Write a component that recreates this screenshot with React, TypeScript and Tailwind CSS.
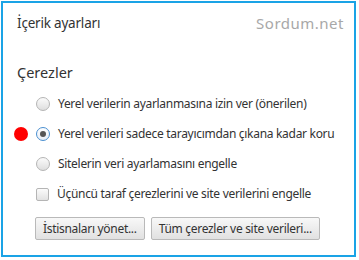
const font = { fontFamily: '"Noto Sans", "Open Sans", sans-serif' };

// Radio
const Radio = ({ checked }: { checked?: boolean }) =>
    checked ? (
        <span className="w-[14px] h-[14px] rounded-full border border-[#4a8fd0] bg-gradient-to-b from-[#ffffff] to-[#e8eef6] flex items-center justify-center shrink-0">
            <span className="w-[6px] h-[6px] rounded-full bg-[#555555]"></span>
        </span>
    ) : (
        <span className="w-[14px] h-[14px] rounded-full border border-[#b5b5b5] bg-gradient-to-b from-[#fbfbfb] to-[#dedede] shrink-0"></span>
    );

// Checkbox
const Check = () => (
    <span className="w-[13px] h-[13px] rounded-[2px] border border-[#b5b5b5] bg-gradient-to-b from-[#fbfbfb] to-[#e2e2e2] shrink-0"></span>
);

// Row
const Row = ({ children, label, dot }: { children: React.ReactNode; label: string; dot?: boolean }) => (
    <div className="h-[20px] flex items-center">
        <span className={`w-[14px] h-[14px] rounded-full shrink-0 ${dot ? "bg-[#ff0000]" : ""}`}></span>
        <span className="w-[8px] shrink-0"></span>
        {children}
        <span className="ml-[8px] text-[12px] tracking-[-0.3px] text-[#333333] whitespace-nowrap">{label}</span>
    </div>
);

// Button
const Btn = ({ label }: { label: string }) => (
    <button className="h-[23px] px-[7px] border border-[#b9b9b9] rounded-[2px] bg-gradient-to-b from-[#f8f8f8] to-[#e1e1e1] text-[12px] tracking-[-0.3px] text-[#333333] whitespace-nowrap leading-none">
        {label}
    </button>
);

export default function App() {
    return (
        <div className="w-[359px] h-[260px] bg-white p-[1px]" style={font}>
            <div className="w-[355px] h-[256px] border-2 border-[#1aa3e6] bg-white flex flex-col pl-[11px] pr-[10px]">
                <div className="flex items-center justify-between h-[20px] mt-[10px]">
                    <span className="pl-[3px] text-[13.5px] tracking-[-0.2px] text-[#333333]">İçerik ayarları</span>
                    <span className="text-[15px] text-[#a8a8a8] tracking-[0.5px]">Sordum.net</span>
                </div>

                <div className="h-[20px] mt-[30px] pl-[3px] flex items-center text-[14.5px] text-[#333333]">Çerezler</div>

                <div className="mt-[11px] flex flex-col gap-[10px]">
                    <Row label="Yerel verilerin ayarlanmasına izin ver (önerilen)"><Radio /></Row>
                    <Row label="Yerel verileri sadece tarayıcımdan çıkana kadar koru" dot><Radio checked /></Row>
                    <Row label="Sitelerin veri ayarlamasını engelle"><Radio /></Row>
                    <Row label="Üçüncü taraf çerezlerini ve site verilerini engelle"><Check /></Row>
                </div>

                <div className="mt-[13px] pl-[21px] flex gap-[6px]">
                    <Btn label="İstisnaları yönet..." />
                    <Btn label="Tüm çerezler ve site verileri..." />
                </div>
            </div>
        </div>
    );
}
